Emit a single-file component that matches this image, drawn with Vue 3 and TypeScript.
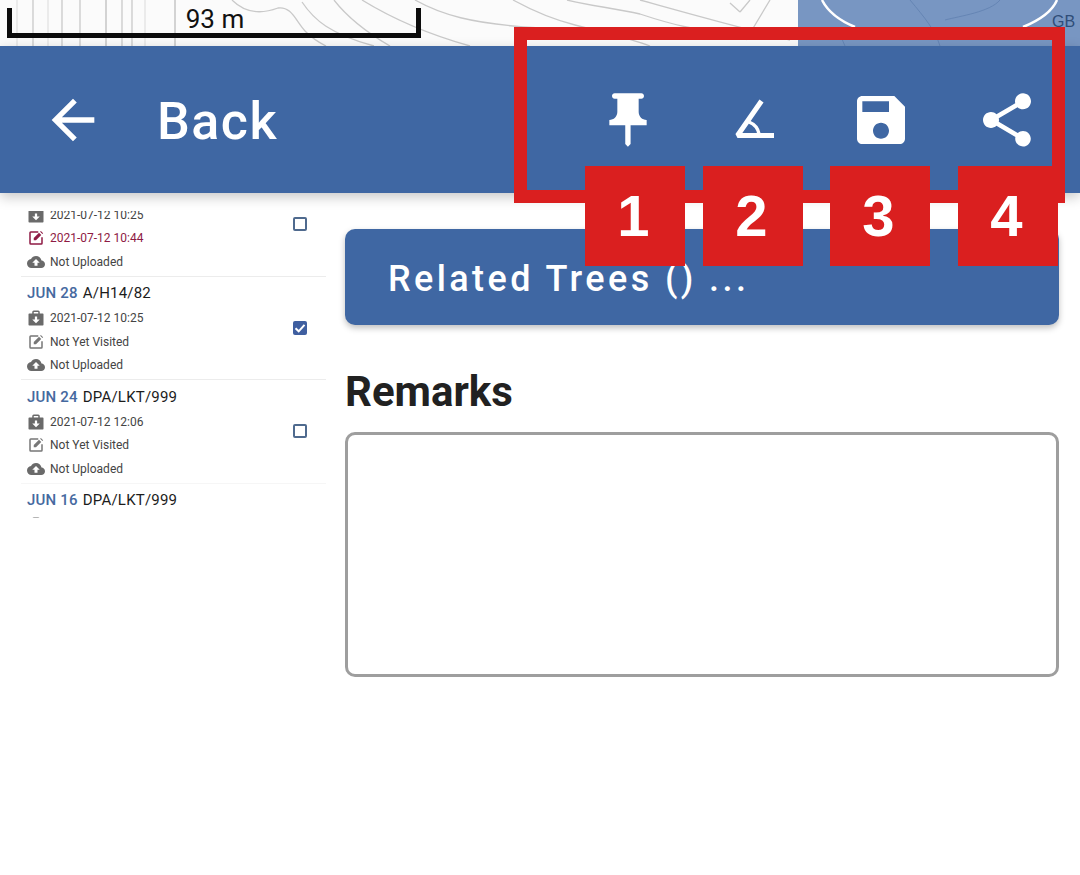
<script setup lang="ts">
interface Row {
  date: string
  code: string
  down: string
  edit: string
  late?: boolean
  checked?: boolean
}

const rows: Row[] = [
  { date: 'JUN 29', code: 'A/H14/82', down: '2021-07-12 10:25', edit: '2021-07-12 10:44', late: true },
  { date: 'JUN 28', code: 'A/H14/82', down: '2021-07-12 10:25', edit: 'Not Yet Visited', checked: true },
  { date: 'JUN 24', code: 'DPA/LKT/999', down: '2021-07-12 12:06', edit: 'Not Yet Visited' },
  { date: 'JUN 16', code: 'DPA/LKT/999', down: '2021-07-12 12:06', edit: 'Not Yet Visited' },
]
const labels = [
  { n: 1, x: 585 },
  { n: 2, x: 703 },
  { n: 3, x: 830 },
  { n: 4, x: 958 },
]
</script>

<template>
  <div class="page">
    <div class="map">
      <svg class="contours" width="1080" height="46" viewBox="0 0 1080 46" fill="none">
        <g stroke="#c9c9c9" stroke-width="1.300">
          <path d="M33 0V46M62 0V46M80 0V46M122 0V46M132 0V46" />
          <path d="M106 0V46M175 0V46" stroke="#bdbdbd" />
          <path d="M17 0V46M48 0V46M145 0V46" stroke="#e2e2e2" />
          <path d="M232 0C246 14 262 14 278 8C292 6 296 22 306 32C312 38 318 42 326 46" />
          <path d="M302 2C314 20 330 34 374 46" />
          <path d="M334 0C348 18 366 32 390 46" />
          <path d="M362 0C388 16 420 32 470 46" />
          <path d="M415 0C440 14 470 24 540 28" />
          <path d="M513 0C535 12 555 20 575 25C600 32 630 38 650 46" />
          <path d="M567 0C590 6 615 8 640 14C670 24 700 32 740 34" />
          <path d="M640 0C670 8 710 20 790 40" />
          <path d="M730 3L740 12M770 0L746 40M740 12L750 0" />
        </g>
        <rect x="798" width="282" height="46" fill="#7896c2" />
        <g stroke="#6585b4" stroke-width="1">
          <path d="M910 0C925 18 935 30 940 46M1000 0C990 12 960 16 945 20M845 46L838 30" />
        </g>
        <path d="M822 0C828 12 838 20 855 27M1057 0C1052 12 1040 20 1023 27" stroke="#fff" stroke-width="2.500" />
      </svg>
      <div class="scale">
        <span>93 m</span>
      </div>
      <span class="gb">GB</span>
    </div>

    <header class="bar">
      <svg class="ico" viewBox="0 0 24 24" fill="#fff"><path d="M20 11H7.83l5.59-5.59L12 4l-8 8 8 8 1.41-1.41L7.83 13H20v-2z" /></svg>
      <span class="back">Back</span>
      <div class="actions">
        <svg class="ico" viewBox="0 0 24 24" fill="#fff"><path d="M16,9V4l1,0c0.55,0,1-0.45,1-1v0c0-0.55-0.45-1-1-1H7C6.45,2,6,2.45,6,3v0c0,0.55,0.45,1,1,1l1,0v5c0,1.66-1.34,3-3,3h0v2h5.97v7l1,1l1-1v-7H19v-2h0C17.34,12,16,10.66,16,9z" /></svg>
        <svg class="ico" viewBox="0 0 64 64" fill="none" stroke="#fff"><path d="M39.500 13L15.500 47.500H52" stroke-width="5" stroke-linejoin="bevel" /><path d="M27 34C32 36 36 40 37 46" stroke-width="3.500" /></svg>
        <svg class="ico" viewBox="0 0 24 24" fill="#fff"><path d="M17 3H5c-1.11 0-2 .9-2 2v14c0 1.1.89 2 2 2h14c1.1 0 2-.9 2-2V7l-4-4zm-5 16c-1.66 0-3-1.34-3-3s1.34-3 3-3 3 1.34 3 3-1.34 3-3 3zm3-10H5V5h10v4z" /></svg>
        <svg class="ico" viewBox="0 0 24 24" fill="#fff"><path d="M18 16.08c-.76 0-1.44.3-1.96.77L8.91 12.700c.05-.23.09-.46.09-.7s-.04-.47-.09-.7l7.050-4.110c.54.5 1.250.81 2.040.81 1.660 0 3-1.340 3-3s-1.340-3-3-3-3 1.340-3 3c0 .24.04.47.09.7L8.040 9.810C7.500 9.310 6.790 9 6 9c-1.660 0-3 1.340-3 3s1.340 3 3 3c.79 0 1.500-.31 2.040-.81l7.120 4.160c-.05.21-.08.43-.08.65 0 1.610 1.310 2.920 2.920 2.920 1.610 0 2.920-1.310 2.920-2.920s-1.310-2.920-2.920-2.920z" /></svg>
      </div>
    </header>

    <main class="body">
      <section class="list">
        <div class="scroller">
          <article v-for="row in rows" :key="row.date" class="row">
            <div class="info">
              <div class="title"><span class="date">{{ row.date }}</span><span class="code">{{ row.code }}</span></div>
              <div class="line">
                <svg class="mini" viewBox="0 0 24 24" fill="#6a6a6a"><path fill-rule="evenodd" d="M9 2h6a2 2 0 0 1 2 2v2h4a1 1 0 0 1 1 1v14a1 1 0 0 1-1 1H3a1 1 0 0 1-1-1V7a1 1 0 0 1 1-1h4V4a2 2 0 0 1 2-2zm0 2v2h6V4H9zm1.500 6v4H7l5 5 5-5h-3.500v-4h-3z" /></svg>
                <span>{{ row.down }}</span>
              </div>
              <div class="line" :class="{ late: row.late }">
                <svg class="mini" viewBox="0 0 24 24" :fill="row.late ? '#8e1a44' : '#777'"><path d="M5 3h10v2H5v14h14V11h2v8a2 2 0 0 1-2 2H5a2 2 0 0 1-2-2V5a2 2 0 0 1 2-2z" /><path d="M9 15v-3L16 5l3 3-7 7H9zM17.500 3.500l1-1 3 3-1 1-3-3z" /></svg>
                <span>{{ row.edit }}</span>
              </div>
              <div class="line">
                <svg class="mini" viewBox="0 0 24 24" fill="#6a6a6a"><path d="M19.350 10.040C18.670 6.590 15.640 4 12 4 9.110 4 6.600 5.640 5.350 8.040 2.340 8.360 0 10.910 0 14c0 3.310 2.690 6 6 6h13c2.760 0 5-2.240 5-5 0-2.640-2.050-4.780-4.650-4.960zM14 13v4h-4v-4H7l5-5 5 5h-3z" /></svg>
                <span>Not Uploaded</span>
              </div>
            </div>
            <span class="check" :class="{ on: row.checked }">
              <svg v-if="row.checked" viewBox="0 0 14 14" fill="none" stroke="#fff" stroke-width="2"><path d="M2.500 7.200L5.700 10.300L11.500 3.800" /></svg>
            </span>
          </article>
        </div>
      </section>

      <section class="detail">
        <button class="related" type="button">Related Trees () ...</button>
        <h2 class="remarks">Remarks</h2>
        <div class="textarea"></div>
      </section>
    </main>

    <div class="frame"></div>
    <div v-for="l in labels" :key="l.n" class="label" :style="{ left: l.x + 'px' }">{{ l.n }}</div>
  </div>
</template>

<style>
html,
body {
  margin: 0;
  background: #fff;
}
</style>

<style scoped>
.page {
  position: relative;
  width: 1080px;
  height: 875px;
  overflow: hidden;
  background: #fff;
  font-family: Roboto, sans-serif;
  color: #212121;
}
.map {
  position: relative;
  height: 46px;
  overflow: hidden;
  background: #fbfbfb;
}
.contours {
  position: absolute;
  inset: 0;
  display: block;
}
.scale {
  position: absolute;
  left: 7px;
  top: 8px;
  width: 414px;
  height: 30px;
  box-sizing: border-box;
  padding-left: 2px;
  border: 5px solid #0c0c0c;
  border-top: 0;
  text-align: center;
  font-size: 26px;
  line-height: 22px;
  color: #111;
}
.gb {
  position: absolute;
  left: 1052px;
  top: 13px;
  font-family: 'Liberation Sans', sans-serif;
  font-size: 16px;
  line-height: 17px;
  color: #2f4d78;
}
.bar {
  position: relative;
  z-index: 1;
  display: flex;
  align-items: center;
  height: 147px;
  padding: 0 41px;
  background: #3f67a3;
  box-shadow: 0 4px 12px rgba(0, 0, 0, 0.22);
}
.ico {
  display: block;
  flex: none;
  width: 64px;
  height: 64px;
}
.back {
  margin: 5px 0 0 52px;
  font-size: 52px;
  font-weight: 500;
  line-height: 60px;
  color: #fff;
  letter-spacing: 1.500px;
}
.actions {
  display: flex;
  gap: 62.400px;
  margin-left: auto;
}
.body {
  display: grid;
  grid-template-columns: 345px 714px;
}
.list {
  margin-top: 18px;
  height: 307px;
  padding-left: 21px;
  overflow: hidden;
}
.scroller {
  width: 305px;
  margin-top: -38px;
}
.row {
  display: flex;
  align-items: center;
  justify-content: space-between;
  box-sizing: border-box;
  height: 103.500px;
  padding: 0 19px 0 6px;
  border-bottom: 1px solid #ececec;
}
.row:nth-child(3) {
  border-bottom-color: #f6f6f6;
}
.info {
  display: flex;
  flex-direction: column;
  padding-top: 4px;
}
.title {
  display: flex;
  align-items: center;
  gap: 5px;
  height: 24px;
  margin: -1.500px 0 1.500px;
  font-size: 15px;
  letter-spacing: 0.2px;
}
.date {
  color: #46699f;
  font-weight: 500;
}
.code {
  color: #1c1c1c;
}
.line {
  display: flex;
  align-items: center;
  gap: 5px;
  height: 23.500px;
  font-size: 12px;
  color: #444;
}
.line.late {
  color: #8e1a44;
}
.mini {
  flex: none;
  width: 18px;
  height: 18px;
}
.check {
  display: block;
  flex: none;
  box-sizing: border-box;
  width: 14px;
  height: 14px;
  border: 2px solid #4f6a8e;
  border-radius: 2px;
  background: #fff;
}
.check.on {
  border: 0;
  background: #3f5fa0;
}
.check svg {
  display: block;
  width: 14px;
  height: 14px;
}
.detail {
  display: flex;
  flex-direction: column;
  padding-top: 36px;
}
.related {
  height: 96px;
  padding: 3px 0 0 43px;
  border: 0;
  border-radius: 10px;
  background: #3f67a3;
  box-shadow: 0 3px 6px rgba(0, 0, 0, 0.25);
  color: #fff;
  font-family: Roboto, sans-serif;
  font-size: 36px;
  font-weight: 500;
  letter-spacing: 3.400px;
  text-align: left;
}
.remarks {
  margin: 43px 0 16px;
  font-size: 42px;
  font-weight: 700;
  line-height: 48px;
  color: #212121;
}
.textarea {
  box-sizing: border-box;
  height: 245px;
  border: 3px solid #9e9e9e;
  border-radius: 10px;
}
.frame {
  position: absolute;
  left: 514px;
  top: 27px;
  box-sizing: border-box;
  width: 551px;
  height: 176px;
  border: 13px solid #da1f1f;
  z-index: 2;
}
.label {
  position: absolute;
  top: 166px;
  z-index: 3;
  box-sizing: border-box;
  width: 100px;
  height: 100px;
  padding-right: 3px;
  background: #da1f1f;
  color: #fff;
  font-family: 'Liberation Sans', sans-serif;
  font-size: 58px;
  font-weight: 700;
  line-height: 100px;
  text-align: center;
}
</style>
